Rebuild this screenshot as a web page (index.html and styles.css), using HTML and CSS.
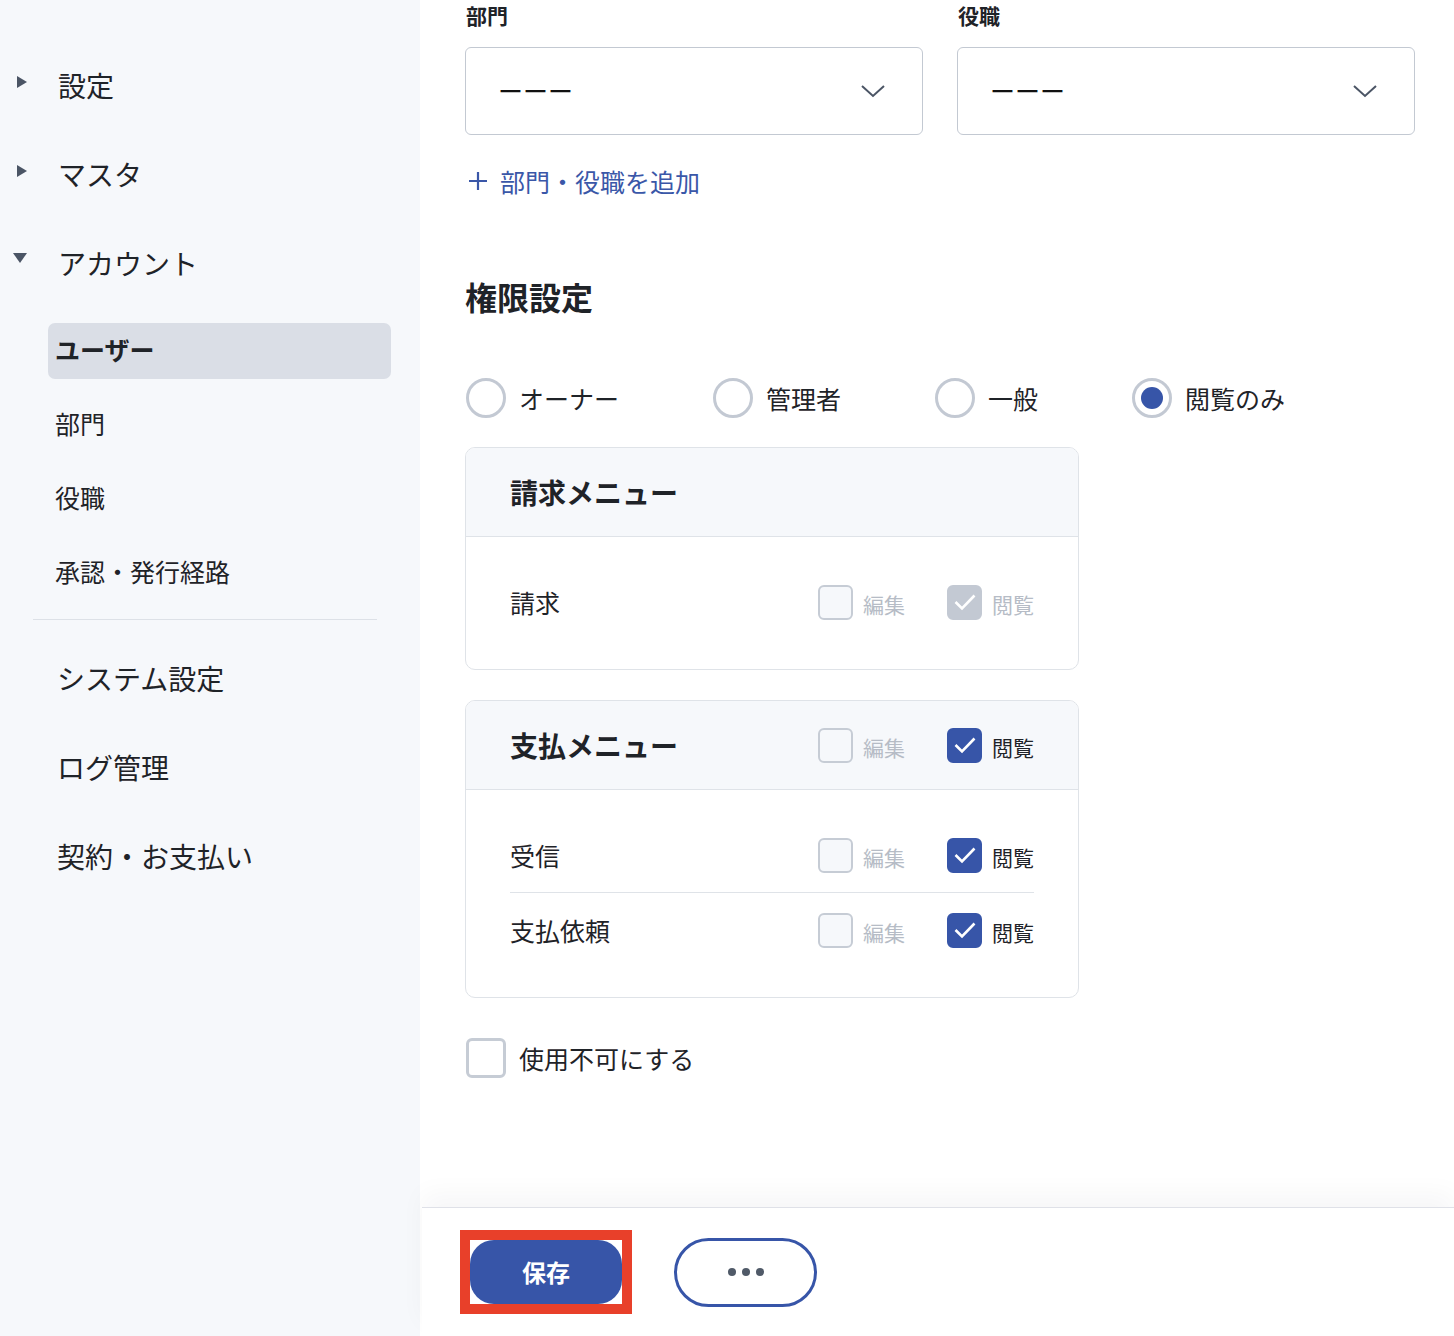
FILE: index.html
```html
<!DOCTYPE html>
<html lang="ja">
<head>
<meta charset="utf-8">
<title>ユーザー編集</title>
<link rel="stylesheet" href="styles.css">
</head>
<body>
<div class="app">
  <aside class="sidebar">
    <nav class="nav">
      <div class="nav-top">
        <span class="caret"><svg width="12" height="14" viewBox="0 0 12 14"><path d="M1 1 L11 7 L1 13 Z" fill="#4b5565"/></svg></span>
        <span>設定</span>
      </div>
      <div class="nav-top">
        <span class="caret"><svg width="12" height="14" viewBox="0 0 12 14"><path d="M1 1 L11 7 L1 13 Z" fill="#4b5565"/></svg></span>
        <span>マスタ</span>
      </div>
      <div class="nav-top">
        <span class="caret caret-down"><svg width="16" height="12" viewBox="0 0 16 12"><path d="M1 1 L15 1 L8 11 Z" fill="#4b5565"/></svg></span>
        <span>アカウント</span>
      </div>
      <div class="nav-sub">
        <div class="sub-item active">ユーザー</div>
        <div class="sub-item">部門</div>
        <div class="sub-item">役職</div>
        <div class="sub-item">承認・発行経路</div>
      </div>
      <hr class="nav-divider">
      <div class="nav-top plain">システム設定</div>
      <div class="nav-top plain">ログ管理</div>
      <div class="nav-top plain">契約・お支払い</div>
    </nav>
  </aside>

  <main class="main">
    <div class="content">
      <div class="field-row">
        <div class="field">
          <div class="field-label">部門</div>
          <div class="select">
            <span class="select-value">ーーー</span>
            <svg class="chevron" width="26" height="16" viewBox="0 0 26 16"><path d="M2 3 L13 13 L24 3" fill="none" stroke="#4b5565" stroke-width="2"/></svg>
          </div>
        </div>
        <div class="field">
          <div class="field-label">役職</div>
          <div class="select">
            <span class="select-value">ーーー</span>
            <svg class="chevron" width="26" height="16" viewBox="0 0 26 16"><path d="M2 3 L13 13 L24 3" fill="none" stroke="#4b5565" stroke-width="2"/></svg>
          </div>
        </div>
      </div>

      <div class="add-link">
        <svg width="20" height="20" viewBox="0 0 20 20"><path d="M10 1 V19 M1 10 H19" stroke="#3a57a8" stroke-width="2.2" fill="none"/></svg>
        <span>部門・役職を追加</span>
      </div>

      <h2 class="section-title">権限設定</h2>

      <div class="radio-group">
        <div class="radio-item"><span class="radio"></span><span>オーナー</span></div>
        <div class="radio-item"><span class="radio"></span><span>管理者</span></div>
        <div class="radio-item"><span class="radio"></span><span>一般</span></div>
        <div class="radio-item"><span class="radio checked"></span><span>閲覧のみ</span></div>
      </div>

      <section class="panel">
        <div class="panel-head">
          <h3 class="panel-title">請求メニュー</h3>
        </div>
        <div class="panel-body">
          <div class="perm-row">
            <span class="perm-name">請求</span>
            <div class="perm-checks">
              <div class="check-item disabled"><span class="box"></span><span>編集</span></div>
              <div class="check-item disabled"><span class="box on muted"><svg width="24" height="20" viewBox="0 0 24 20"><path d="M2.5 10 L9 16.5 L21.5 3.5" fill="none" stroke="#fff" stroke-width="2.6"/></svg></span><span>閲覧</span></div>
            </div>
          </div>
        </div>
      </section>

      <section class="panel">
        <div class="panel-head">
          <h3 class="panel-title">支払メニュー</h3>
          <div class="perm-checks">
            <div class="check-item disabled"><span class="box"></span><span>編集</span></div>
            <div class="check-item"><span class="box on"><svg width="24" height="20" viewBox="0 0 24 20"><path d="M2.5 10 L9 16.5 L21.5 3.5" fill="none" stroke="#fff" stroke-width="2.6"/></svg></span><span>閲覧</span></div>
          </div>
        </div>
        <div class="panel-body">
          <div class="perm-row">
            <span class="perm-name">受信</span>
            <div class="perm-checks">
              <div class="check-item disabled"><span class="box"></span><span>編集</span></div>
              <div class="check-item"><span class="box on"><svg width="24" height="20" viewBox="0 0 24 20"><path d="M2.5 10 L9 16.5 L21.5 3.5" fill="none" stroke="#fff" stroke-width="2.6"/></svg></span><span>閲覧</span></div>
            </div>
          </div>
          <div class="perm-row">
            <span class="perm-name">支払依頼</span>
            <div class="perm-checks">
              <div class="check-item disabled"><span class="box"></span><span>編集</span></div>
              <div class="check-item"><span class="box on"><svg width="24" height="20" viewBox="0 0 24 20"><path d="M2.5 10 L9 16.5 L21.5 3.5" fill="none" stroke="#fff" stroke-width="2.6"/></svg></span><span>閲覧</span></div>
            </div>
          </div>
        </div>
      </section>

      <div class="disable-toggle">
        <span class="big-box"></span>
        <span>使用不可にする</span>
      </div>
    </div>

    <footer class="footer">
      <span class="save-frame">
        <button class="btn-save" type="button">保存</button>
      </span>
      <button class="btn-more" type="button" aria-label="その他">
        <span class="dot"></span><span class="dot"></span><span class="dot"></span>
      </button>
    </footer>
  </main>
</div>
</body>
</html>
```

FILE: styles.css
```css
* {
  box-sizing: border-box;
}

html, body {
  margin: 0;
  padding: 0;
}

body {
  font-family: "Noto Sans CJK JP", "Noto Sans", sans-serif;
  color: #1f2328;
  background: #ffffff;
}

.app {
  display: grid;
  grid-template-columns: 420px 1fr;
  height: 1336px;
  overflow: hidden;
}

/* ---------- sidebar ---------- */
.sidebar {
  background: #f6f8fb;
  padding-top: 40px;
}

.nav-top {
  height: 89px;
  display: flex;
  align-items: center;
  padding-left: 58px;
  font-size: 28px;
  line-height: 40px;
  color: #1f2328;
  position: relative;
}

.caret {
  position: absolute;
  left: 16px;
  top: 35px;
  display: flex;
}

.caret-down {
  left: 12px;
  top: 34px;
}

.nav-sub {
  margin: 16px 29px 0 48px;
  display: flex;
  flex-direction: column;
  gap: 18px;
}

.sub-item {
  height: 56px;
  display: flex;
  align-items: center;
  padding: 0 0 4px 7px;
  font-size: 25px;
  color: #1f2328;
  border-radius: 7px;
}

.sub-item.active {
  background: #dadee6;
  font-weight: 700;
}

.nav-divider {
  border: 0;
  border-top: 1px solid #dde1e7;
  margin: 18px 43px 14px 33px;
  height: 0;
}

.nav-top.plain {
  padding-left: 57px;
  padding-bottom: 2px;
}

/* ---------- main ---------- */
.main {
  display: flex;
  flex-direction: column;
  min-height: 0;
}

.content {
  flex: 1;
  padding: 2px 39px 0 45px;
}

.field-row {
  display: grid;
  grid-template-columns: 1fr 1fr;
  gap: 34px;
}

.field-label {
  font-size: 21px;
  font-weight: 700;
  line-height: 26px;
  margin-bottom: 19px;
  padding-left: 1px;
}

.select {
  height: 88px;
  border: 1px solid #c3c9d2;
  border-radius: 6px;
  display: flex;
  align-items: center;
  justify-content: space-between;
  padding: 0 36px 0 32px;
  background: #fff;
}

.select-value {
  font-size: 25px;
  line-height: 30px;
  color: #111;
  padding-bottom: 2px;
}

.add-link {
  display: flex;
  align-items: center;
  gap: 12px;
  margin-top: 31px;
  padding-left: 3px;
  font-size: 25px;
  line-height: 30px;
  color: #3a57a8;
}

.section-title {
  margin: 80px 0 0;
  font-size: 32px;
  line-height: 40px;
  font-weight: 700;
}

.radio-group {
  display: flex;
  gap: 94px;
  margin-top: 62px;
  padding-left: 1px;
}

.radio-item {
  display: flex;
  align-items: center;
  gap: 13px;
  font-size: 25px;
  line-height: 40px;
}

.radio {
  width: 40px;
  height: 40px;
  border: 3px solid #c3c9d3;
  border-radius: 50%;
  display: flex;
  align-items: center;
  justify-content: center;
  background: #fff;
}

.radio.checked::after {
  content: "";
  width: 22px;
  height: 22px;
  border-radius: 50%;
  background: #3755a8;
}

/* ---------- permission panels ---------- */
.panel {
  width: 614px;
  border: 1px solid #dfe3e8;
  border-radius: 10px;
  overflow: hidden;
  margin-top: 29px;
}

.panel + .panel {
  margin-top: 30px;
}

.panel-head {
  height: 89px;
  background: #f6f8fb;
  border-bottom: 1px solid #dfe3e8;
  display: flex;
  align-items: center;
  justify-content: space-between;
  padding: 0 44px;
}

.panel-title {
  margin: 0;
  font-size: 28px;
  font-weight: 700;
  line-height: 36px;
}

.panel-body {
  padding: 28px 44px 30px;
}

.perm-row {
  height: 74px;
  display: flex;
  align-items: center;
  justify-content: space-between;
}

.perm-row + .perm-row {
  border-top: 1px solid #dfe3e8;
  height: 75px;
}

.perm-name {
  font-size: 25px;
  line-height: 34px;
}

.perm-checks {
  display: flex;
  gap: 42px;
}

.check-item {
  display: flex;
  align-items: center;
  gap: 10px;
  font-size: 21px;
  line-height: 34px;
  color: #1f2328;
}

.check-item span:last-child {
  padding-top: 3px;
}

.check-item.disabled {
  color: #b6bcc6;
}

.box {
  width: 35px;
  height: 35px;
  border: 2px solid #c6ccd5;
  border-radius: 6px;
  background: #f6f8fb;
  display: flex;
  align-items: center;
  justify-content: center;
}

.box.on {
  background: #3755a8;
  border-color: #3755a8;
}

.box.on.muted {
  background: #c3c9d3;
  border-color: #c3c9d3;
}

.disable-toggle {
  display: flex;
  align-items: center;
  gap: 13px;
  margin-top: 40px;
  padding-left: 1px;
  font-size: 25px;
  line-height: 40px;
}

.big-box {
  width: 40px;
  height: 40px;
  border: 3px solid #c6ccd5;
  border-radius: 6px;
  background: #fff;
}

/* ---------- footer ---------- */
.footer {
  height: 129px;
  flex: none;
  margin-left: 2px;
  border-top: 1px solid #dfe1e8;
  box-shadow: 0 -14px 24px rgba(30, 40, 60, 0.035);
  display: flex;
  align-items: center;
  gap: 42px;
  padding-left: 38px;
  background: #fff;
}

.save-frame {
  display: flex;
  border: 10px solid #e8402a;
  background: #fff;
}

.btn-save {
  width: 152px;
  height: 64px;
  border: 0;
  border-radius: 24px;
  background: #3755a8;
  color: #fff;
  font-family: inherit;
  font-size: 24px;
  font-weight: 700;
  padding: 0 0 2px;
}

.btn-more {
  width: 143px;
  height: 69px;
  border: 3px solid #3755a8;
  border-radius: 35px;
  background: #fff;
  display: flex;
  align-items: center;
  justify-content: center;
  gap: 6px;
  padding: 0;
}

.dot {
  width: 8px;
  height: 8px;
  border-radius: 50%;
  background: #505a68;
}
```
